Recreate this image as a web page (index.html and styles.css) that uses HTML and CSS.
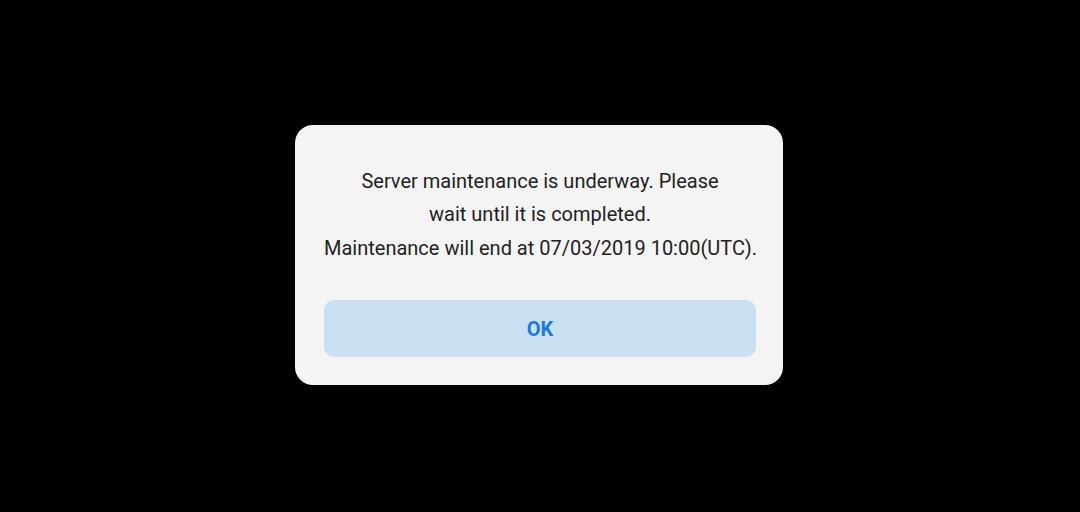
FILE: index.html
```html
<!DOCTYPE html>
<html lang="en">
<head>
    <meta charset="UTF-8">
    <meta name="viewport" content="width=device-width, initial-scale=1.0">
    <title>Server maintenance</title>
    <link rel="stylesheet" href="styles.css">
</head>
<body>

<div class="overlay">
    <div class="dialog">
        <p class="message">
            Server maintenance is underway. Please<br>
            wait until it is completed.<br>
            Maintenance will end at 07/03/2019 10:00(UTC).
        </p>
        <button class="ok-button">OK</button>
    </div>
</div>

</body>
</html>
```

FILE: styles.css
```css
html, body {
    margin: 0;
    height: 100%;
    background-color: #000;
}
.overlay {
    height: 512px;
    display: flex;
    align-items: center;
    justify-content: center;
}
.dialog {
    width: 488px;
    box-sizing: border-box;
    padding: 40px 27px 28px 29px;
    background-color: #f4f4f4;
    border-radius: 18px;
    margin-left: -2px;
    margin-top: -2px;
}
.message {
    margin: 0 0 35px;
    font-family: Roboto, "Liberation Sans", sans-serif;
    font-size: 20px;
    line-height: 33.5px;
    text-align: center;
    color: #222;
    white-space: nowrap;
}
.ok-button {
    display: block;
    width: 100%;
    height: 57px;
    border: none;
    border-radius: 10px;
    background-color: #cbdff3;
    color: #1a78e0;
    font-family: Roboto, "Liberation Sans", sans-serif;
    font-size: 20px;
    font-weight: bold;
    cursor: pointer;
}
```
